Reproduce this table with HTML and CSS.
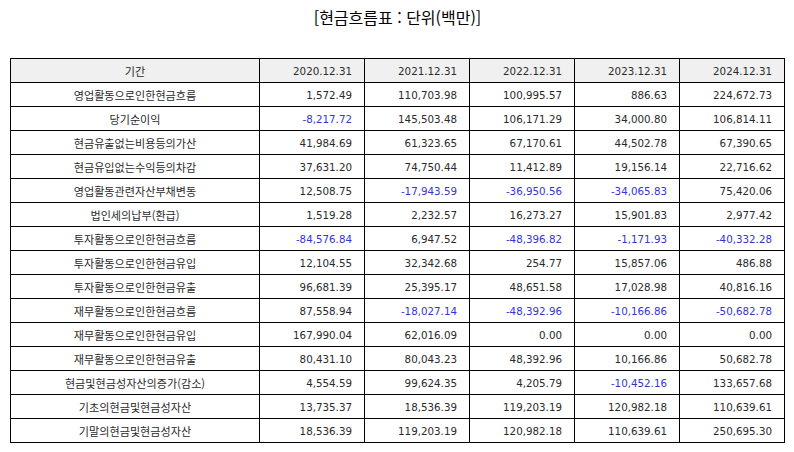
FILE: index.html
```html
<!DOCTYPE html>
<html lang="ko">
<head>
<meta charset="utf-8">
<link rel="stylesheet" href="styles.css">
</head>
<body>
<h1 class="title">[현금흐름표 : 단위(백만)]</h1>
<table class="cf">
<colgroup><col class="c-label"><col class="c-num"><col class="c-num"><col class="c-num"><col class="c-num"><col class="c-num"></colgroup>
<thead>
<tr><th class="lbl">기간</th><th>2020.12.31</th><th>2021.12.31</th><th>2022.12.31</th><th>2023.12.31</th><th>2024.12.31</th></tr>
</thead>
<tbody>
<tr><td class="lbl">영업활동으로인한현금흐름</td><td>1,572.49</td><td>110,703.98</td><td>100,995.57</td><td>886.63</td><td>224,672.73</td></tr>
<tr><td class="lbl">당기순이익</td><td class="neg">-8,217.72</td><td>145,503.48</td><td>106,171.29</td><td>34,000.80</td><td>106,814.11</td></tr>
<tr><td class="lbl">현금유출없는비용등의가산</td><td>41,984.69</td><td>61,323.65</td><td>67,170.61</td><td>44,502.78</td><td>67,390.65</td></tr>
<tr><td class="lbl">현금유입없는수익등의차감</td><td>37,631.20</td><td>74,750.44</td><td>11,412.89</td><td>19,156.14</td><td>22,716.62</td></tr>
<tr><td class="lbl">영업활동관련자산부채변동</td><td>12,508.75</td><td class="neg">-17,943.59</td><td class="neg">-36,950.56</td><td class="neg">-34,065.83</td><td>75,420.06</td></tr>
<tr><td class="lbl">법인세의납부(환급)</td><td>1,519.28</td><td>2,232.57</td><td>16,273.27</td><td>15,901.83</td><td>2,977.42</td></tr>
<tr><td class="lbl">투자활동으로인한현금흐름</td><td class="neg">-84,576.84</td><td>6,947.52</td><td class="neg">-48,396.82</td><td class="neg">-1,171.93</td><td class="neg">-40,332.28</td></tr>
<tr><td class="lbl">투자활동으로인한현금유입</td><td>12,104.55</td><td>32,342.68</td><td>254.77</td><td>15,857.06</td><td>486.88</td></tr>
<tr><td class="lbl">투자활동으로인한현금유출</td><td>96,681.39</td><td>25,395.17</td><td>48,651.58</td><td>17,028.98</td><td>40,816.16</td></tr>
<tr><td class="lbl">재무활동으로인한현금흐름</td><td>87,558.94</td><td class="neg">-18,027.14</td><td class="neg">-48,392.96</td><td class="neg">-10,166.86</td><td class="neg">-50,682.78</td></tr>
<tr><td class="lbl">재무활동으로인한현금유입</td><td>167,990.04</td><td>62,016.09</td><td>0.00</td><td>0.00</td><td>0.00</td></tr>
<tr><td class="lbl">재무활동으로인한현금유출</td><td>80,431.10</td><td>80,043.23</td><td>48,392.96</td><td>10,166.86</td><td>50,682.78</td></tr>
<tr><td class="lbl">현금및현금성자산의증가(감소)</td><td>4,554.59</td><td>99,624.35</td><td>4,205.79</td><td class="neg">-10,452.16</td><td>133,657.68</td></tr>
<tr><td class="lbl">기초의현금및현금성자산</td><td>13,735.37</td><td>18,536.39</td><td>119,203.19</td><td>120,982.18</td><td>110,639.61</td></tr>
<tr><td class="lbl">기말의현금및현금성자산</td><td>18,536.39</td><td>119,203.19</td><td>120,982.18</td><td>110,639.61</td><td>250,695.30</td></tr>
</tbody>
</table>
</body>
</html>
```

FILE: styles.css
```css
html, body {
  margin: 0;
  padding: 0;
  background: #ffffff;
}
body {
  font-family: "Noto Sans CJK KR", "Noto Sans", sans-serif;
  color: #111111;
  padding: 0 9px 0 10px;
}
.title {
  margin: 0;
  height: 58px;
  padding-top: 5px;
  box-sizing: border-box;
  font-size: 16px;
  font-weight: normal;
  line-height: 24px;
  text-align: center;
  color: #000000;
}
.cf {
  width: 775px;
  border-collapse: collapse;
  table-layout: fixed;
  font-family: "DejaVu Sans", "Noto Sans CJK KR", sans-serif;
  font-size: 10.3px;
}
.c-label { width: 249px; }
.c-num { width: 105px; }
.cf th, .cf td {
  border: 1px solid #000000;
  height: 23px;
  padding: 0 12px;
  text-align: right;
  font-weight: normal;
  line-height: 14px;
  white-space: nowrap;
  color: #2a2a2a;
}
.cf thead th {
  background: #f0f0f0;
}
.cf .lbl {
  text-align: center;
  font-family: "Noto Sans CJK KR", sans-serif;
  font-size: 11.1px;
}
.cf .neg {
  color: #3535d0;
}
```
